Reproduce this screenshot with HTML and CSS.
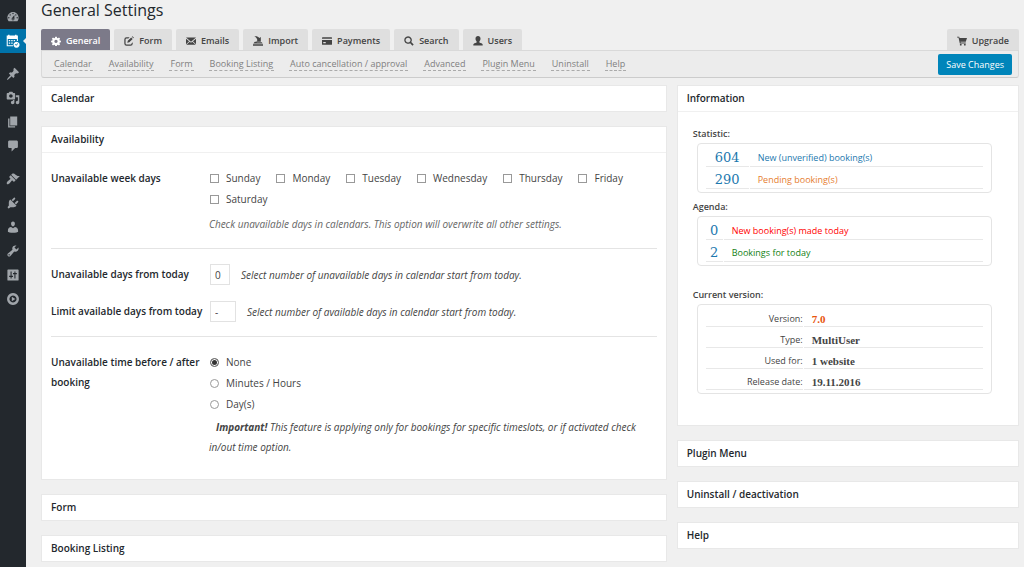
FILE: index.html
```html
<!DOCTYPE html>
<html lang="en">

<head>
    <meta charset="UTF-8">
    <meta name="viewport" content="width=device-width, initial-scale=1.0">
    <title>General Settings</title>
    <link rel="stylesheet" href="styles.css">
</head>

<body>
    <nav class="sidebar" aria-label="Admin menu">
        <a href="#" aria-label="Dashboard"><svg viewBox="0 0 20 20"><path fill-rule="evenodd" d="M3.76 16h12.48c1.1-1.37 1.76-3.11 1.76-5 0-4.42-3.58-8-8-8s-8 3.58-8 8c0 1.89.66 3.63 1.76 5zM10 4c.55 0 1 .45 1 1s-.45 1-1 1-1-.45-1-1 .45-1 1-1zM6 6c.55 0 1 .45 1 1s-.45 1-1 1-1-.45-1-1 .45-1 1-1zm8 0c.55 0 1 .45 1 1s-.45 1-1 1-1-.45-1-1 .45-1 1-1zm-5.37 5.55L12 7v6c0 1.1-.9 2-2 2s-2-.9-2-2c0-.57.24-1.08.63-1.45zM4 10c.55 0 1 .45 1 1s-.45 1-1 1-1-.45-1-1 .45-1 1-1zm12 0c.55 0 1 .45 1 1s-.45 1-1 1-1-.45-1-1 .45-1 1-1zm-5 3c0-.55-.45-1-1-1s-1 .45-1 1 .45 1 1 1 1-.45 1-1z"/></svg></a>
        <a href="#" class="current" aria-label="Booking"><svg viewBox="0 0 20 20"><path fill-rule="evenodd" d="M1 2h2V1h2v1h8V1h2v1h2v8h-1.500V7h-13v9H10v1.500H1zM4 8.500h2v2H4zm3.500 0h2v2h-2zm3.500 0h2v2h-2zM4 12h2v2H4zm3.500 0h2v2h-2z"/><path fill-rule="evenodd" d="M15 11a4.300 4.300 0 1 0 .01 0zM12.800 15l.8-.8 1 1 1.900-1.900.8.8-2.700 2.700z"/></svg></a>
        <span class="separator"></span>
        <a href="#" aria-label="Posts"><svg viewBox="0 0 20 20"><path d="M10.440 3.020l1.820-1.820 6.360 6.350-1.830 1.820c-1.050-.68-2.480-.57-3.410.36l-.75.75c-.92.93-1.040 2.350-.35 3.410l-1.830 1.820-2.410-2.410-2.800 2.790c-.42.42-3.380 2.710-3.800 2.290s1.860-3.390 2.280-3.810l2.790-2.790L4.100 9.360l1.830-1.820c1.050.69 2.480.57 3.400-.36l.75-.75c.93-.92 1.050-2.350.36-3.410z"/></svg></a>
        <a href="#" aria-label="Media"><svg viewBox="0 0 20 20"><path fill-rule="evenodd" d="M13 11V4c0-.55-.45-1-1-1h-1.670L9 1H5L3.670 3H2c-.55 0-1 .45-1 1v7c0 .55.45 1 1 1h10c.55 0 1-.45 1-1zM7 4.500c1.380 0 2.500 1.120 2.500 2.500S8.380 9.500 7 9.500 4.500 8.380 4.500 7 5.620 4.500 7 4.500zM14 6h5v10.500c0 1.380-1.120 2.500-2.500 2.500S14 17.880 14 16.500s1.120-2.500 2.500-2.500c.17 0 .34.02.5.05V9h-3V6zm-4 8.050V13h2v3.500c0 1.380-1.120 2.500-2.500 2.500S7 17.880 7 16.500 8.120 14 9.500 14c.17 0 .34.02.5.05z"/></svg></a>
        <a href="#" aria-label="Pages"><svg viewBox="0 0 20 20"><path d="M6 15V2h10v13H6zm-1 1h8v2H3V5h2v11z"/></svg></a>
        <a href="#" aria-label="Comments"><svg viewBox="0 0 20 20"><path d="M5 2h10c1.100 0 2 .9 2 2v7c0 1.100-.9 2-2 2h-2l-5 5v-5H5c-1.100 0-2-.9-2-2V4c0-1.100.9-2 2-2z"/></svg></a>
        <span class="separator"></span>
        <a href="#" aria-label="Appearance"><svg viewBox="0 0 20 20"><path d="M14.480 11.060L7.410 3.990l1.500-1.500c.5-.56 2.300-.47 3.510.32 1.210.8 1.430 1.280 2.910 2.100 1.180.64 2.450 1.260 4.450.85zm-.71.71L6.700 4.700 4.930 6.470c-.39.39-.39 1.020 0 1.410l1.060 1.060c.39.39.39 1.030 0 1.420-.6.6-1.430 1.110-2.210 1.690-.35.26-.7.53-1.010.84C1.430 14.230.4 16.080 1.400 17.070c.99 1 2.840-.03 4.180-1.360.31-.31.58-.66.85-1.020.57-.78 1.080-1.610 1.690-2.210.39-.39 1.020-.39 1.410 0l1.060 1.060c.39.39 1.020.39 1.410 0z"/></svg></a>
        <a href="#" aria-label="Plugins"><svg viewBox="0 0 20 20"><path d="M13.110 4.360L9.870 7.600 8 5.730l3.240-3.240c.35-.34 1.050-.2 1.560.32.52.51.66 1.210.31 1.550zm-8 1.770l.91-1.120 9.010 9.010-1.190.84c-.71.71-2.630 1.160-3.820 1.160H6.140L4.900 17.260c-.59.59-1.540.59-2.120 0-.59-.58-.59-1.530 0-2.120l1.240-1.240v-3.880c0-1.130.4-3.190 1.090-3.890zm7.260 3.970l3.240-3.240c.34-.35 1.040-.21 1.550.31.52.51.66 1.210.31 1.550l-3.240 3.250z"/></svg></a>
        <a href="#" aria-label="Users"><svg viewBox="0 0 20 20"><path d="M10 9.250c-2.270 0-2.730-3.440-2.730-3.440C7 4.020 7.820 2 9.970 2c2.160 0 2.980 2.020 2.710 3.810 0 0-.41 3.440-2.680 3.440zm0 2.570L12.720 10c2.390 0 4.520 2.330 4.520 4.530v2.490s-3.650 1.130-7.240 1.130c-3.650 0-7.240-1.130-7.240-1.130v-2.490c0-2.250 1.940-4.480 4.470-4.480z"/></svg></a>
        <a href="#" aria-label="Tools"><svg viewBox="0 0 20 20"><path fill-rule="evenodd" d="M16.680 9.770c-1.340 1.340-3.300 1.670-4.950.99l-5.410 6.520c-.99.99-2.590.99-3.580 0s-.99-2.590 0-3.570l6.520-5.420c-.68-1.650-.35-3.610.99-4.950 1.280-1.280 3.120-1.620 4.720-1.060l-2.890 2.890 2.820 2.820 2.860-2.870c.53 1.580.18 3.390-1.080 4.650zM3.810 16.210c.4.39 1.040.39 1.430 0 .4-.4.4-1.040 0-1.430-.39-.4-1.030-.4-1.430 0-.39.39-.39 1.030 0 1.430z"/></svg></a>
        <a href="#" aria-label="Settings"><svg viewBox="0 0 20 20"><path fill-rule="evenodd" d="M18 17V3c0-.55-.45-1-1-1H3c-.55 0-1 .45-1 1v14c0 .55.45 1 1 1h14c.55 0 1-.45 1-1zM6.500 5H8v6h2v2H8v2H6.500v-2h-2v-2h2zM12 5h1.500v2h2v2h-2v6H12V9h-2V7h2z"/></svg></a>
        <a href="#" aria-label="Collapse menu"><svg viewBox="0 0 20 20"><path fill-rule="evenodd" d="M10 1.500a8.500 8.500 0 1 0 .01 0zM10 5a5 5 0 1 1-.01 0z"/><path d="M8.300 6.800l5 3.200-5 3.200z"/></svg></a>
    </nav>

    <main class="content">
        <h1>General Settings</h1>

        <nav class="tabs" aria-label="Settings sections">
            <a href="#" class="tab active"><svg viewBox="0 0 16 16"><path fill-rule="evenodd" d="M6.700 1h2.600l.4 2 1.300.6L12.800 2.400l1.800 1.800L13.400 6l.5 1.200 2 .4v2.200l-2 .4-.5 1.200 1.200 1.800-1.800 1.800-1.800-1.200-1.300.5-.4 1.700H6.700l-.4-1.700-1.300-.5L3.200 15l-1.800-1.800 1.200-1.800-.5-1.200-2-.4V7.600l2-.4L2.600 6 1.400 4.200l1.800-1.800L5 3.600 6.300 3zM8 6a2.600 2.600 0 1 0 .01 0z"/></svg>General</a>
            <a href="#" class="tab"><svg viewBox="0 0 16 16"><path d="M9 2H4a3.500 3.500 0 0 0-3.500 3.500V12A3.500 3.500 0 0 0 4 15.500h6.500A3.500 3.500 0 0 0 14 12v-2l-2 2a1.500 1.500 0 0 1-1.500 1.500H4A1.500 1.500 0 0 1 2.500 12V5.500A1.500 1.500 0 0 1 4 4h3z"/><path d="M11.500 2.200l2.400 2.400L8.500 10l-3.300.8.900-3.200zM12.500 1.200l1-1 2.400 2.400-1 1z"/></svg>Form</a>
            <a href="#" class="tab"><svg viewBox="0 0 16 16"><path d="M0 2.500h16L8 9zM0 4.500L5 8.300 0 13zM16 4.500V13l-5-4.700zM6 9l2 1.700L10 9l5.500 5H.5z"/></svg>Emails</a>
            <a href="#" class="tab"><svg viewBox="0 0 16 16"><path d="M0 13h16v2.500H0zM3 9h2l1.500 1H14l1.500 2H.5z"/><path d="M2 .5c4-.5 6.500.5 8 2.500l2.500-1.500V9H5l2-2.200C6.500 4 5 2 2 .5z"/></svg>Import</a>
            <a href="#" class="tab"><svg viewBox="0 0 16 16"><path d="M1 2h14a1 1 0 0 1 1 1v1.500H0V3a1 1 0 0 1 1-1z"/><path fill-rule="evenodd" d="M0 6.500h16V13a1 1 0 0 1-1 1H1a1 1 0 0 1-1-1zM2 9.500v2h4v-2z"/></svg>Payments</a>
            <a href="#" class="tab"><svg viewBox="0 0 16 16"><path fill-rule="evenodd" d="M6.500 0.500a6 6 0 1 0 3.300 11l3.700 4 2-2-3.900-3.800A6 6 0 0 0 6.500.5zM6.500 2.700a3.900 3.900 0 1 1-.01 0z"/></svg>Search</a>
            <a href="#" class="tab"><svg viewBox="0 0 16 16"><path d="M8 0c2.400 0 4 1.500 4 4 0 2-.8 3.500-1.800 4.600v1.600c2.300.8 5.300 1.800 5.300 3.300V15H.5v-1.500c0-1.500 3-2.500 5.300-3.300V8.600C4.800 7.500 4 6 4 4c0-2.500 1.600-4 4-4z"/></svg>Users</a>
            <a href="#" class="tab upgrade"><svg viewBox="0 0 16 16"><path d="M0 1h3.500l.6 2H16l-2 6H5.500l.4 1.500H14V12H4.500L2.400 2.500H0z"/><circle cx="6" cy="13.800" r="1.500"/><circle cx="12.500" cy="13.800" r="1.500"/></svg>Upgrade</a>
        </nav>

        <div class="toolbar">
            <a href="#calendar">Calendar</a>
            <a href="#availability">Availability</a>
            <a href="#form">Form</a>
            <a href="#listing">Booking Listing</a>
            <a href="#">Auto cancellation / approval</a>
            <a href="#">Advanced</a>
            <a href="#menu">Plugin Menu</a>
            <a href="#uninstall">Uninstall</a>
            <a href="#help">Help</a>
            <button type="submit" form="settings" class="save">Save Changes</button>
        </div>

        <div class="columns">
            <form class="column main-column" id="settings">
                <section class="panel" id="calendar">
                    <h2>Calendar</h2>
                </section>

                <section class="panel" id="availability">
                    <h2>Availability</h2>
                    <div class="settings">
                        <div class="row" role="group" aria-labelledby="weekdays">
                            <div class="name" id="weekdays">Unavailable week days</div>
                            <div class="field">
                                <div class="days">
                                    <label><input type="checkbox">Sunday</label>
                                    <label><input type="checkbox">Monday</label>
                                    <label><input type="checkbox">Tuesday</label>
                                    <label><input type="checkbox">Wednesday</label>
                                    <label><input type="checkbox">Thursday</label>
                                    <label><input type="checkbox">Friday</label>
                                    <label><input type="checkbox">Saturday</label>
                                </div>
                                <p class="description light">Check unavailable days in calendars. This option will overwrite all other settings.</p>
                            </div>
                        </div>
                        <hr>
                        <div class="row select-row">
                            <label class="name" for="from-today">Unavailable days from today</label>
                            <div class="field inline">
                                <select id="from-today"><option>0</option></select>
                                <span class="description">Select number of unavailable days in calendar start from today.</span>
                            </div>
                        </div>
                        <div class="row select-row">
                            <label class="name" for="limit">Limit available days from today</label>
                            <div class="field inline">
                                <select id="limit" class="wide"><option>-</option></select>
                                <span class="description">Select number of available days in calendar start from today.</span>
                            </div>
                        </div>
                        <hr>
                        <div class="row" role="group" aria-labelledby="time">
                            <div class="name" id="time">Unavailable time before / after booking</div>
                            <div class="field">
                                <div class="times">
                                    <label><input type="radio" name="time" checked>None</label>
                                    <label><input type="radio" name="time">Minutes / Hours</label>
                                    <label><input type="radio" name="time">Day(s)</label>
                                </div>
                                <p class="description note"><strong>Important!</strong> This feature is applying only for bookings for specific timeslots, or if activated check in/out time option.</p>
                            </div>
                        </div>
                    </div>
                </section>

                <section class="panel" id="form">
                    <h2>Form</h2>
                </section>
                <section class="panel" id="listing">
                    <h2>Booking Listing</h2>
                </section>
            </form>

            <aside class="column side-column">
                <section class="panel">
                    <h2>Information</h2>
                    <div class="info">
                        <h3>Statistic:</h3>
                        <div class="box">
                            <table class="stats">
                                <tr><td class="count">604</td><td><a href="#" class="blue">New (unverified) booking(s)</a></td></tr>
                                <tr><td class="count">290</td><td><a href="#" class="orange">Pending booking(s)</a></td></tr>
                            </table>
                        </div>
                        <h3>Agenda:</h3>
                        <div class="box">
                            <table class="stats agenda">
                                <tr><td class="count">0</td><td><a href="#" class="red">New booking(s) made today</a></td></tr>
                                <tr><td class="count">2</td><td><a href="#" class="green">Bookings for today</a></td></tr>
                            </table>
                        </div>
                        <h3 class="version-title">Current version:</h3>
                        <div class="box">
                            <table class="version">
                                <tr><th>Version:</th><td class="number">7.0</td></tr>
                                <tr><th>Type:</th><td>MultiUser</td></tr>
                                <tr><th>Used for:</th><td>1 website</td></tr>
                                <tr><th>Release date:</th><td>19.11.2016</td></tr>
                            </table>
                        </div>
                    </div>
                </section>

                <section class="panel" id="menu">
                    <h2>Plugin Menu</h2>
                </section>
                <section class="panel" id="uninstall">
                    <h2>Uninstall / deactivation</h2>
                </section>
                <section class="panel" id="help">
                    <h2>Help</h2>
                </section>
            </aside>
        </div>
    </main>
</body>

</html>
```

FILE: styles.css
```css
* {
    margin: 0;
    padding: 0;
    box-sizing: border-box;
}

body {
    display: flex;
    min-height: 100vh;
    background-color: #f0f0f0;
    color: #444;
    font-family: "Segoe UI", "Open Sans", sans-serif;
    font-size: 10px;
    line-height: 14px;
}

a {
    text-decoration: none;
}

svg {
    display: block;
    fill: currentColor;
}

/* left menu */
.sidebar {
    flex: none;
    width: 26px;
    padding-top: 5px;
    background-color: #23282d;
}

.sidebar a {
    display: flex;
    align-items: center;
    justify-content: center;
    height: 24px;
    color: #a0a5aa;
}

.sidebar svg {
    width: 14px;
    height: 14px;
}

.sidebar .current {
    position: relative;
    background-color: #0073aa;
    color: #fff;
}

.sidebar .current::after {
    content: "";
    position: absolute;
    right: 0;
    top: 9px;
    border: 3px solid transparent;
    border-left: 0;
    border-right-color: #f0f0f0;
}

.separator {
    display: block;
    height: 9px;
}

.content {
    flex: 1;
    min-width: 0;
    padding: 0 5px 4px 15px;
}

h1 {
    height: 29px;
    color: #23282d;
    font-size: 16px;
    font-weight: 400;
    line-height: 21px;
}

/* tabs */
.tabs {
    display: flex;
    gap: 4px;
}

.tab {
    display: flex;
    align-items: center;
    gap: 5px;
    height: 21px;
    padding: 2px 10px 0;
    border-radius: 2px 2px 0 0;
    background-color: #dfdfdf;
    color: #444;
    font-size: 9px;
    font-weight: 600;
}

.tab svg {
    width: 10px;
    height: 10px;
}

.tab.active {
    background-color: #7c7a89;
    color: #fff;
}

.upgrade {
    margin-left: auto;
}

.toolbar {
    display: flex;
    align-items: center;
    gap: 15px;
    height: 28px;
    padding: 1px 6px 0 11px;
    border: 1px solid #d9d9d9;
    border-bottom: 1px solid #ccc;
    border-radius: 0 0 3px 3px;
    background-color: #ececec;
    font-size: 9px;
}

.toolbar a {
    padding: 0 1px;
    border-bottom: 1px dashed #aaa;
    color: #808080;
    line-height: 12px;
}

.save {
    height: 21px;
    margin-left: auto;
    padding: 0 8px;
    border: 0;
    border-radius: 2px;
    background-color: #0085ba;
    color: #fff;
    font: inherit;
}

/* panels */
.columns {
    display: flex;
    gap: 10px;
    margin-top: 7px;
}

.column {
    display: flex;
    flex-direction: column;
    gap: 14px;
}

.main-column {
    flex: 1;
    min-width: 0;
}

.side-column {
    width: 35%;
}

.panel {
    border: 1px solid #e8e8e8;
    background-color: #fff;
}

.panel h2 {
    padding: 6px 9px;
    color: #23282d;
    font-size: 10px;
    font-weight: 600;
    line-height: 13px;
}

.settings,
.info {
    border-top: 1px solid #f0f0f0;
}

.settings {
    padding: 15px 9px 22px;
}

.row {
    display: flex;
}

.name {
    flex: none;
    width: 158px;
    color: #23282d;
    font-weight: 600;
    line-height: 20px;
}

.field {
    flex: 1;
    line-height: 20px;
}

.days {
    display: flex;
    flex-wrap: wrap;
    column-gap: 15px;
    row-gap: 1px;
}

.days label,
.times label {
    display: flex;
    align-items: center;
    gap: 7px;
}

.field input {
    appearance: none;
    width: 9px;
    height: 9px;
    margin-left: 1px;
    border: 1px solid #999;
    background-color: #fff;
}

.field input[type="radio"] {
    border-radius: 50%;
}

.field input[type="radio"]:checked {
    border-color: #777;
    background-color: #333;
    box-shadow: inset 0 0 0 1px #fff;
}

.times {
    display: flex;
    flex-direction: column;
    gap: 1px;
}

.description {
    font-style: italic;
}

.days + .description {
    margin-top: 5px;
}

.light {
    color: #666;
}

.note {
    margin-top: 3px;
}

.note strong {
    margin-left: 7px;
}

hr {
    height: 1px;
    margin: 14px 0 15px;
    border: 0;
    background-color: #e4e4e4;
}

.select-row + .select-row {
    margin-top: 16px;
}

.inline {
    display: flex;
    align-items: center;
    gap: 11px;
}

select {
    appearance: none;
    width: 20px;
    height: 21px;
    margin-left: 1px;
    padding: 0 4px;
    border: 1px solid #e2e2e2;
    background-color: #fff;
    color: #444;
    font: inherit;
}

select.wide {
    width: 26px;
}

/* information */
.info {
    padding: 15px 26px 24px 15px;
}

.info h3 {
    color: #444;
    font-size: 9px;
    font-weight: 600;
}

.box {
    margin: 2px 0 7px 4px;
    padding: 1px 7px 3px;
    border: 1px solid #e4e4e4;
    border-radius: 4px;
}

.info .version-title {
    margin-top: 22px;
}

table {
    width: 100%;
    border-spacing: 1px 0;
    font-size: 9px;
}

td,
th {
    height: 22px;
    padding-top: 5px;
    border-bottom: 1px solid #e8e8e8;
}

td {
    padding-left: 8px;
}

td.count {
    width: 43px;
    padding-left: 0;
    color: #1c78ae;
    font-family: Georgia, "DejaVu Serif", serif;
    font-size: 13px;
    text-align: center;
}

.agenda td.count {
    width: 17px;
}

.version th {
    width: 97px;
    font-weight: 400;
    text-align: right;
}

.version th,
.version td {
    height: 21px;
}

.version td {
    font-family: Georgia, "Liberation Serif", serif;
    font-size: 11px;
    font-weight: 700;
}

.blue {
    color: #1c78ae;
}

.orange {
    color: #e67e30;
}

.red {
    color: #f00;
}

.green {
    color: #138013;
}

.version .number {
    color: #e8540c;
}
```
